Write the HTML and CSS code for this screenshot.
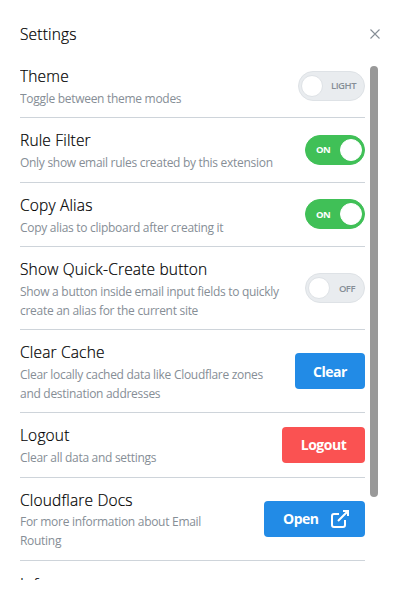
FILE: index.html
```
<!DOCTYPE html>
<html lang="en">
<head>
<meta charset="utf-8">
<title>Settings</title>
<link rel="stylesheet" href="styles.css">
</head>
<body>
<main class="modal">
  <header class="header">
    <h1>Settings</h1>
    <svg class="close" viewBox="0 0 10 10"><path d="M.5.5l9 9M9.500.5l-9 9"/></svg>
  </header>
  <div class="scroll">
    <div class="list">
      <section class="row first"><div class="text"><h2>Theme</h2><p>Toggle between theme modes</p></div><div class="switch wide"><i></i><span>LIGHT</span></div></section>
      <section class="row"><div class="text"><h2>Rule Filter</h2><p>Only show email rules created by this extension</p></div><div class="switch on"><span>ON</span><i></i></div></section>
      <section class="row"><div class="text"><h2>Copy Alias</h2><p>Copy alias to clipboard after creating it</p></div><div class="switch on"><span>ON</span><i></i></div></section>
      <section class="row tall"><div class="text"><h2>Show Quick-Create button</h2><p>Show a button inside email input fields to quickly<br>create an alias for the current site</p></div><div class="switch"><i></i><span>OFF</span></div></section>
      <section class="row tall"><div class="text"><h2>Clear Cache</h2><p>Clear locally cached data like Cloudflare zones<br>and destination addresses</p></div><div class="button clear">Clear</div></section>
      <section class="row"><div class="text"><h2>Logout</h2><p>Clear all data and settings</p></div><div class="button logout">Logout</div></section>
      <section class="row tall"><div class="text"><h2>Cloudflare Docs</h2><p>For more information about Email<br>Routing</p></div><div class="button open">Open<svg viewBox="0 0 24 24"><path d="M11 7H6a2 2 0 0 0-2 2v9a2 2 0 0 0 2 2h9a2 2 0 0 0 2-2v-5M10 14L20 4M15 4h5v5"/></svg></div></section>
      <section class="row last"><div class="text"><h2>Info</h2></div></section>
    </div>
    <div class="thumb"></div>
  </div>
</main>
</body>
</html>
```
FILE: styles.css
```
* { box-sizing: border-box; }
body { margin: 0; background: #fff; color: #000; font-family: "Open Sans", "Noto Sans", sans-serif; }
.modal { width: 400px; height: 600px; padding: 20px; overflow: hidden; }
.header { display: flex; height: 28px; align-items: center; justify-content: space-between; }
h1, h2, p { margin: 0; font-weight: 400; white-space: nowrap; }
h1, h2 { font-size: 15.5px; font-weight: 300; letter-spacing: 0.17px; -webkit-text-stroke: 0.2px #000; }
h1 { line-height: 28px; }
.close { width: 10px; height: 10px; fill: none; stroke: #868e96; stroke-width: 1.1; }
.scroll { display: flex; height: 514px; margin-top: 18px; overflow: hidden; gap: 5px; }
.list { width: 345px; flex: none; }
.thumb { width: 8px; height: 431px; border-radius: 4px; background: #999; flex: none; }
.row { height: 64.4px; padding-top: 12px; display: flex; justify-content: space-between; align-items: flex-start; border-bottom: 1px solid #ced4da; }
.row.first { height: 52.4px; padding-top: 0; }
.row.tall { height: 83px; }
.row.last { padding-top: 13px; }
h2 { line-height: 21.4px; }
p { color: #868e96; font-size: 12px; line-height: 19px; letter-spacing: -0.29px; padding-top: 1.4px; }
.switch { width: 60px; height: 30px; margin-top: 4.6px; border: 1px solid #dee2e6; border-radius: 15px; background: #e9ecef; display: flex; align-items: center; justify-content: space-between; padding: 0 9px 0 2px; color: #868e96; font-size: 9.5px; font-weight: 600; letter-spacing: -0.5px; }
.tall .switch { margin-top: 14px; }
.switch i { width: 22px; height: 22px; border-radius: 50%; background: #fff; border: 1px solid #dee2e6; }
.switch.wide { width: 67px; padding-right: 8px; }
.switch.on { background: #40c057; border-color: #40c057; color: #fff; padding: 0 2px 0 10px; font-weight: 700; }
.switch.on i { border-color: #fff; }
.button { height: 36px; margin-top: 1.6px; border-radius: 4px; background: #228be6; color: #fff; font-size: 14px; font-weight: 700; letter-spacing: -0.5px; display: flex; align-items: center; justify-content: center; }
.tall .button { margin-top: 11px; }
.clear { width: 70px; }
.logout { width: 83px; background: #fa5252; }
.open { width: 101px; justify-content: space-between; padding: 0 13px 0 19px; }
.open svg { width: 24px; fill: none; stroke: #fff; stroke-width: 2; }
```
